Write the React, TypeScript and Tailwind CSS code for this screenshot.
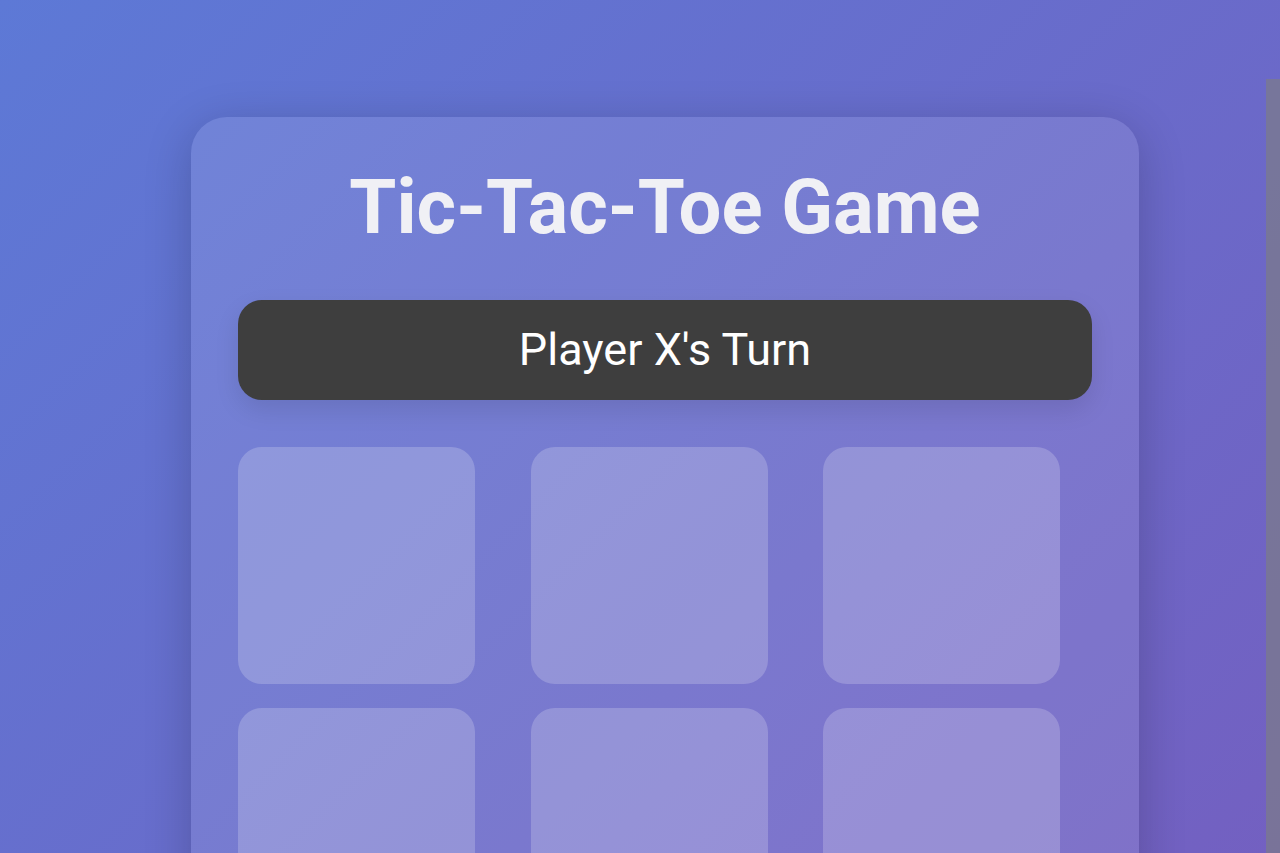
import { useState } from 'react';

type Mark = 'X' | 'O' | null;

const emptyBoard: Mark[] = Array(9).fill(null);

export default function App() {
  const [board, setBoard] = useState<Mark[]>(emptyBoard);
  const [player, setPlayer] = useState<'X' | 'O'>('X');

  const play = (index: number) => {
    if (board[index]) return;
    setBoard(board.map((mark, i) => (i === index ? player : mark)));
    setPlayer(player === 'X' ? 'O' : 'X');
  };

  return (
    <div className="flex h-screen overflow-hidden bg-linear-135/srgb from-[#5d79d6] to-[#7360c1] font-['Roboto',sans-serif]">
      <main className="min-w-0 flex-1 pt-[117px] pr-[127px] pl-[191px]">
        <section className="rounded-[36px] bg-white/10 p-[47px] shadow-[0_10px_48px_rgba(0,0,0,0.2)]">
          <h1 className="mb-[49px] text-center text-[76px] leading-[87px] font-bold text-[#f0f0f5]">
            Tic-Tac-Toe Game
          </h1>
          <p className="mb-[47px] rounded-3xl bg-[#3e3e3e] py-6 text-center text-[45px] leading-[52px] text-white shadow-[0_10px_24px_rgba(0,0,0,0.1)]">
            Player {player}'s Turn
          </p>
          <div className="grid grid-cols-3 gap-6">
            {board.map((mark, index) => (
              <button
                key={index}
                type="button"
                aria-label={`Cell ${index + 1}`}
                onClick={() => play(index)}
                className="aspect-square w-[237px] max-w-full rounded-3xl bg-white/20 text-8xl font-bold text-white"
              >
                {mark}
              </button>
            ))}
          </div>
        </section>
      </main>
      <div className="mt-[79px] w-[14px] shrink-0 bg-[#7c7c88]/70" />
    </div>
  );
}
